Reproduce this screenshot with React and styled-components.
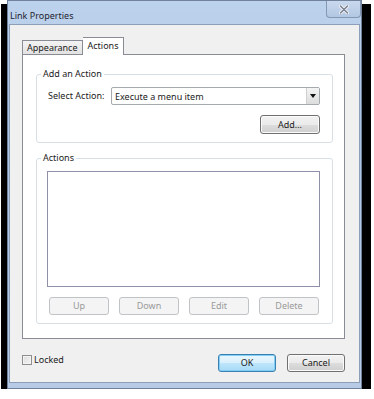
import React from "react";
import styled, { createGlobalStyle } from "styled-components";

const GlobalStyle = createGlobalStyle`
  html, body { margin: 0; padding: 0; background: #ffffff; }
  body {
    font-family: "Noto Sans", "Open Sans", sans-serif;
    font-size: 9px;
    color: #1b1b1b;
  }
  * { box-sizing: border-box; }
`;

const Window = styled.div`
  margin-left: 7px;
  width: 355px;
  height: 389px;
  display: flex;
  flex-direction: column;
  background: linear-gradient(180deg, #bdd2ec 0%, #adc6e6 30%, #b7cbe6 100%);
  border: 1px solid #6f819b;
  box-shadow: -6px 4px 0 #000, 9px 4px 0 #000, -6px 7px 0 #000, 9px 7px 0 #000;
`;

const TitleBar = styled.div`
  height: 24px;
  display: flex;
  align-items: flex-start;
  justify-content: space-between;
  padding-left: 2px;
`;

const Title = styled.div`
  padding-top: 9px;
  font-size: 9px;
  line-height: 12px;
  color: #1e2430;
`;

const CloseButton = styled.div`
  width: 35px;
  height: 17px;
  display: flex;
  align-items: center;
  justify-content: center;
  border: 1px solid #8497b3;
  border-top: none;
  border-radius: 0 0 4px 4px;
  background: linear-gradient(180deg, #c9d9ee, #b2c7e3);
`;

const FrameBody = styled.div`
  flex: 1;
  display: flex;
  padding: 0 1px 5px 1px;
`;

const Client = styled.div`
  flex: 1;
  display: flex;
  flex-direction: column;
  background: #f0f0f0;
  border: 1px solid #8d9eb8;
  padding: 12px 14px 10px 12px;
`;

const TabStrip = styled.div`
  height: 17px;
  display: flex;
  align-items: flex-end;
`;

const Tab = styled.div`
  height: ${(p) => (p.$active ? "18px" : "14px")};
  margin-bottom: ${(p) => (p.$active ? "-1px" : "0")};
  padding: 0 ${(p) => (p.$active ? "5px" : "4px")};
  display: flex;
  align-items: ${(p) => (p.$active ? "flex-start" : "center")};
  padding-top: ${(p) => (p.$active ? "2px" : "0")};
  border: 1px solid #898c95;
  border-bottom: none;
  border-left: ${(p) => (p.$active ? "none" : "1px solid #898c95")};
  background: ${(p) =>
    p.$active ? "#ffffff" : "linear-gradient(180deg, #f3f3f3, #e2e2e2)"};
  position: relative;
  z-index: ${(p) => (p.$active ? 1 : 0)};
  font-size: 9px;
  line-height: 12px;
  color: #1b1b1b;
`;

const TabPanel = styled.div`
  height: 285px;
  display: flex;
  flex-direction: column;
  gap: 9px;
  background: #ffffff;
  border: 1px solid #898c95;
  padding: 13px 11px 14px 13px;
`;

const Group = styled.fieldset`
  margin: 0;
  padding: 0;
  border: 1px solid #d6dfe6;
  border-radius: 3px;
  min-width: 0;
  flex: ${(p) => (p.$grow ? 1 : "none")};
`;

const Legend = styled.legend`
  margin-left: 4px;
  padding: 0 2px;
  font-size: 9px;
  line-height: 12px;
  color: #1b1b1b;
`;

const GroupBody = styled.div`
  display: flex;
  flex-direction: column;
  gap: 10px;
  padding: ${(p) => p.$pad};
`;

const Row = styled.div`
  display: flex;
  align-items: center;
  justify-content: ${(p) => p.$justify || "flex-start"};
`;

const FieldLabel = styled.span`
  width: 63px;
  font-size: 9px;
  line-height: 12px;
`;

const Select = styled.div`
  flex: 1;
  height: 18px;
  display: flex;
  align-items: stretch;
  border: 1px solid #a6a9b0;
  border-radius: 2px;
  background: #ffffff;
`;

const SelectText = styled.span`
  flex: 1;
  padding-left: 3px;
  display: flex;
  align-items: center;
  font-size: 9px;
`;

const SelectArrow = styled.span`
  width: 13px;
  display: flex;
  align-items: center;
  justify-content: center;
  background: linear-gradient(180deg, #f4f4f4, #dcdcdc);
  border-left: 1px solid #d0d0d0;
  &::after {
    content: "";
    border-left: 3px solid transparent;
    border-right: 3px solid transparent;
    border-top: 4px solid #111;
  }
`;

const Button = styled.button`
  width: ${(p) => p.$w || "60px"};
  height: ${(p) => p.$h || "18px"};
  margin: 0;
  padding: 0;
  font-family: inherit;
  font-size: 9px;
  line-height: 12px;
  border-radius: 3px;
  border: 1px solid
    ${(p) => (p.disabled ? "#c0c3c6" : p.$default ? "#3c7fb1" : "#707070")};
  color: ${(p) => (p.disabled ? "#9a9a9a" : "#1b1b1b")};
  background: ${(p) =>
    p.disabled
      ? "#f4f4f4"
      : p.$default
      ? "linear-gradient(180deg, #eaf6fd 0%, #d9f0fc 50%, #bee6fd 51%, #a7d9f5 100%)"
      : "linear-gradient(180deg, #f2f2f2 0%, #ebebeb 50%, #dddddd 51%, #cfcfcf 100%)"};
  box-shadow: inset 0 0 0 1px
    ${(p) => (p.disabled ? "transparent" : p.$default ? "#7fd0f4" : "#fbfbfb")};
`;

const ListBox = styled.div`
  height: 116px;
  background: #ffffff;
  border: 1px solid #8f8fa8;
`;

const ButtonRow = styled.div`
  display: flex;
  gap: 10px;
  padding-left: 2px;
`;

const Footer = styled.div`
  margin-top: 15px;
  height: 18px;
  display: flex;
  align-items: center;
  justify-content: space-between;
`;

const CheckLabel = styled.label`
  display: flex;
  align-items: center;
  gap: 2px;
  font-size: 9px;
  line-height: 12px;
  margin-top: -6px;
`;

const CheckBox = styled.span`
  width: 10px;
  height: 10px;
  border: 1px solid #8e8f8f;
  background: linear-gradient(135deg, #dcdcdc, #f6f6f6);
  box-shadow: inset 0 0 0 1px #f4f4f4;
`;

const FooterButtons = styled.div`
  display: flex;
  gap: 11px;
`;

export default function App() {
  return (
    <>
      <GlobalStyle />
      <Window>
        <TitleBar>
          <Title>Link Properties</Title>
          <CloseButton>
            <svg width="10" height="9" viewBox="0 0 10 9">
              <path d="M1.5 1 L8.5 8 M8.5 1 L1.5 8" stroke="#f4f7fb" strokeWidth="3.2" strokeLinecap="round" />
              <path d="M1.5 1 L8.5 8 M8.5 1 L1.5 8" stroke="#7a8391" strokeWidth="1.6" strokeLinecap="round" />
            </svg>
          </CloseButton>
        </TitleBar>
        <FrameBody>
          <Client>
            <TabStrip>
              <Tab>Appearance</Tab>
              <Tab $active>Actions</Tab>
            </TabStrip>
            <TabPanel>
              <Group>
                <Legend>Add an Action</Legend>
                <GroupBody $pad="7px 12px 8px 11px">
                  <Row>
                    <FieldLabel>Select Action:</FieldLabel>
                    <Select>
                      <SelectText>Execute a menu item</SelectText>
                      <SelectArrow />
                    </Select>
                  </Row>
                  <Row $justify="flex-end">
                    <Button $h="19px">Add...</Button>
                  </Row>
                </GroupBody>
              </Group>
              <Group $grow>
                <Legend>Actions</Legend>
                <GroupBody $pad="7px 12px 8px 10px">
                  <ListBox />
                  <ButtonRow>
                    <Button disabled>Up</Button>
                    <Button disabled>Down</Button>
                    <Button disabled>Edit</Button>
                    <Button disabled>Delete</Button>
                  </ButtonRow>
                </GroupBody>
              </Group>
            </TabPanel>
            <Footer>
              <CheckLabel>
                <CheckBox />
                Locked
              </CheckLabel>
              <FooterButtons>
                <Button $default $w="58px">OK</Button>
                <Button $w="58px">Cancel</Button>
              </FooterButtons>
            </Footer>
          </Client>
        </FrameBody>
      </Window>
    </>
  );
}
